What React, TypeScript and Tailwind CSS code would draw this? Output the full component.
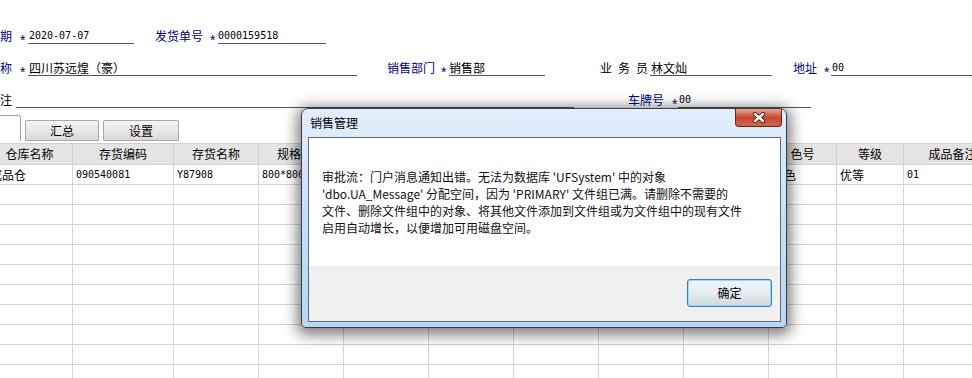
import React from "react";

const NAVY = "text-[#000080]";
const mono = "font-['DejaVu_Sans_Mono',monospace] text-[10px]";

function Star({ ml, w }: { ml: string; w: string }) {
  return (
    <span className={`${ml} ${w} ${NAVY} relative top-[4px] leading-[16px] text-[14px] font-['Liberation_Sans',sans-serif]`}>*</span>
  );
}

const cols = [86, 101, 85, 85, 85, 85, 85, 85, 85, 68, 67, 110];
const headers = ["仓库名称", "存货编码", "存货名称", "规格型号", "", "", "", "", "", "色号", "等级", "成品备注信"];
const row1 = ["成品仓", "090540081", "Y87908", "800*800", "", "", "", "", "", "本色", "优等", "01"];

export default function App() {
  return (
    <div className="relative w-[972px] h-[378px] overflow-hidden bg-white text-[12px] leading-[16px] text-black font-['Noto_Sans_CJK_SC',sans-serif]">
      {/* Form */}
      <div className="pt-[28px] flex flex-col gap-[16px] whitespace-nowrap">
        <div className="flex h-[16px] items-end">
          <span className={`w-[12px] ${NAVY}`}>期</span>
          <Star ml="ml-[8px]" w="w-[8px]" />
          <div className={`w-[106px] h-[16px] border-b border-[#555] pl-[1px] ${mono} leading-[15px]`}>2020-07-07</div>
          <span className={`ml-[21px] w-[48px] ${NAVY}`}>发货单号</span>
          <Star ml="ml-[7px]" w="w-[8px]" />
          <div className={`w-[108px] h-[16px] border-b border-[#555] ${mono} leading-[15px]`}>0000159518</div>
        </div>
        <div className="flex h-[16px] items-end">
          <span className={`w-[12px] ${NAVY}`}>称</span>
          <Star ml="ml-[8px]" w="w-[8px]" />
          <div className="w-[329px] h-[16px] border-b border-[#555] pl-[1px] leading-[15px]">四川苏远煌（豪）</div>
          <span className={`ml-[30px] w-[48px] ${NAVY}`}>销售部门</span>
          <Star ml="ml-[6px]" w="w-[8px]" />
          <div className="w-[96px] h-[16px] border-b border-[#555] leading-[15px]">销售部</div>
          <span className="ml-[55px] w-[48px] flex justify-between">
            <span>业</span>
            <span>务</span>
            <span>员</span>
          </span>
          <div className="ml-[2px] w-[122px] h-[16px] border-b border-[#555] pl-[1px] leading-[15px]">林文灿</div>
          <span className={`ml-[21px] w-[24px] ${NAVY}`}>地址</span>
          <Star ml="ml-[7px]" w="w-[7px]" />
          <div className={`w-[141px] h-[16px] border-b border-[#555] pl-[1px] ${mono} leading-[15px]`}>00</div>
        </div>
        <div className="flex h-[16px] items-end">
          <span className="w-[12px]">注</span>
          <div className="ml-[4px] w-[558px] h-[16px] border-b border-[#555]"></div>
          <span className={`ml-[54px] w-[36px] ${NAVY}`}>车牌号</span>
          <Star ml="ml-[8px]" w="w-[6px]" />
          <div className={`w-[133px] h-[16px] border-b border-[#555] pl-[1px] ${mono} leading-[15px]`}>00</div>
        </div>
      </div>

      {/* Tabs */}
      <div className="mt-[7px] h-[26px] flex items-end">
        <div className="ml-[-10px] w-[31px] h-[26px] border border-b-0 border-[#a0a0a0] rounded-t-[3px] bg-white"></div>
        <div className="ml-[4px] w-[74px] h-[21px] border border-[#a8a8a8] rounded-t-[2px] bg-gradient-to-b from-[#f6f6f6] to-[#dadada] flex items-center justify-center">汇总</div>
        <div className="ml-[4px] w-[76px] h-[21px] border border-[#a8a8a8] rounded-t-[2px] bg-gradient-to-b from-[#f6f6f6] to-[#dadada] flex items-center justify-center">设置</div>
      </div>

      {/* Grid */}
      <div className="mt-[2px] ml-[-13px]">
        <div className="flex h-[22px] border-t border-b border-[#d0d0d0] bg-[#e4e4e4]">
          {cols.map((w, i) => (
            <div
              key={i}
              style={{ width: w }}
              className="shrink-0 h-full border-r border-[#d0d0d0] flex items-center justify-center text-[12px] whitespace-nowrap overflow-hidden"
            >
              {headers[i]}
            </div>
          ))}
        </div>
        {Array.from({ length: 11 }).map((_, r) => (
          <div key={r} className="flex h-[20px] border-b border-[#d4d4d4]">
            {cols.map((w, i) => {
              const v = r === 0 ? row1[i] : "";
              const isAscii = /^[\x00-\x7f]+$/.test(v);
              return (
                <div
                  key={i}
                  style={{ width: w }}
                  className={`shrink-0 h-full border-r border-[#d4d4d4] pl-[3px] flex items-center whitespace-nowrap overflow-hidden ${isAscii ? mono : "text-[12px]"}`}
                >
                  {v}
                </div>
              );
            })}
          </div>
        ))}
      </div>

      {/* Dialog */}
      <div className="absolute left-[301px] top-[108px] w-[486px] h-[220px] rounded-t-[7px] rounded-b-[5px] border border-[#3c3c3c] bg-gradient-to-b from-[#e2eefb] via-[#c9def6] to-[#b9d6f5] shadow-[0_3px_14px_4px_rgba(0,0,0,0.5)] flex flex-col">
        <div className="relative h-[28px] shrink-0 pl-[8px] leading-[28px] text-[12px] text-black">
          销售管理
          <div className="absolute right-[4px] top-0 w-[47px] h-[18px] rounded-b-[4px] border border-t-0 border-[#6f2417] bg-gradient-to-b from-[#e9a596] via-[#c9472f] to-[#d2644c] flex items-center justify-center">
            <svg width="14" height="11" viewBox="0 0 14 11">
              <path d="M3 2 L11 9 M11 2 L3 9" stroke="#4a1a12" strokeWidth="4.2" strokeLinecap="round" />
              <path d="M3 2 L11 9 M11 2 L3 9" stroke="#ffffff" strokeWidth="2.4" strokeLinecap="round" />
            </svg>
          </div>
        </div>
        <div className="ml-[6px] mr-[5px] mb-[5px] flex-1 border border-[#5d6a78] bg-white flex flex-col">
          <div className="h-[128px] shrink-0 pl-[13px] pt-[30px] leading-[17px] text-[12px] text-[#111] whitespace-nowrap">
            <div>审批流：门户消息通知出错。无法为数据库 'UFSystem' 中的对象</div>
            <div>'dbo.UA_Message' 分配空间，因为 'PRIMARY' 文件组已满。请删除不需要的</div>
            <div>文件、删除文件组中的对象、将其他文件添加到文件组或为文件组中的现有文件</div>
            <div>启用自动增长，以便增加可用磁盘空间。</div>
          </div>
          <div className="flex-1 bg-[#f0f0f0] flex justify-end items-start pt-[13px] pr-[8px]">
            <div className="w-[85px] h-[28px] rounded-[3px] border border-[#3c7fb1] shadow-[inset_0_0_0_1px_#8fdcf8] bg-gradient-to-b from-[#f0f4f6] via-[#e6ecf0] to-[#cfd9e0] flex items-center justify-center text-[12px]">
              确定
            </div>
          </div>
        </div>
      </div>
    </div>
  );
}
